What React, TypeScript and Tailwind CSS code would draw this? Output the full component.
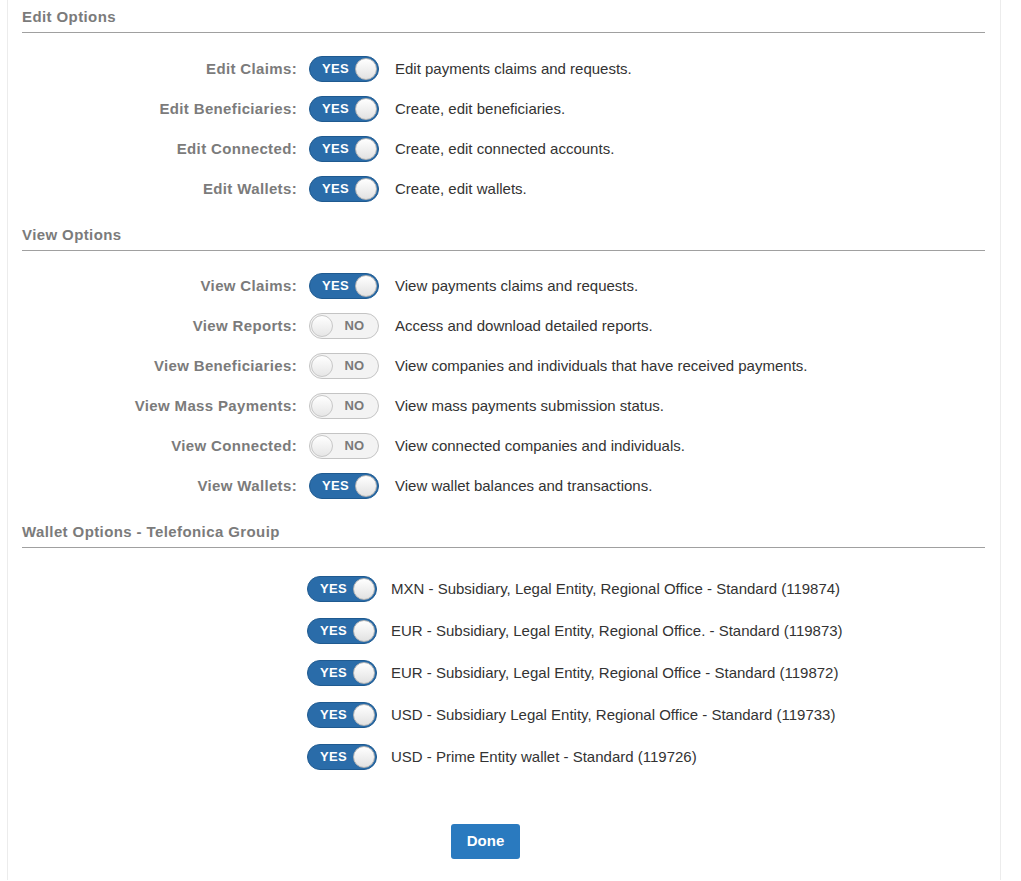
import React from "react";

const editRows = [
  { label: "Edit Claims:", on: true, desc: "Edit payments claims and requests." },
  { label: "Edit Beneficiaries:", on: true, desc: "Create, edit beneficiaries." },
  { label: "Edit Connected:", on: true, desc: "Create, edit connected accounts." },
  { label: "Edit Wallets:", on: true, desc: "Create, edit wallets." },
];

const viewRows = [
  { label: "View Claims:", on: true, desc: "View payments claims and requests." },
  { label: "View Reports:", on: false, desc: "Access and download detailed reports." },
  { label: "View Beneficiaries:", on: false, desc: "View companies and individuals that have received payments." },
  { label: "View Mass Payments:", on: false, desc: "View mass payments submission status." },
  { label: "View Connected:", on: false, desc: "View connected companies and individuals." },
  { label: "View Wallets:", on: true, desc: "View wallet balances and transactions." },
];

const wallets = [
  "MXN - Subsidiary, Legal Entity, Regional Office - Standard (119874)",
  "EUR - Subsidiary, Legal Entity, Regional Office. - Standard (119873)",
  "EUR - Subsidiary, Legal Entity, Regional Office - Standard (119872)",
  "USD - Subsidiary Legal Entity, Regional Office - Standard (119733)",
  "USD - Prime Entity wallet - Standard (119726)",
];

function Toggle({ on }: { on: boolean }) {
  if (on) {
    return (
      <div className="flex items-center justify-between w-[70px] h-[26px] rounded-full bg-[#2a6ca9] border border-[#1f5a90] pl-[12px] pr-[1px] flex-shrink-0">
        <span className="text-white text-[13px] font-bold tracking-[0.3px]">YES</span>
        <span className="w-[22px] h-[22px] rounded-full bg-gradient-to-b from-white to-[#e2e2e2] border border-[#b5b5b5]" />
      </div>
    );
  }
  return (
    <div className="flex items-center justify-between w-[70px] h-[26px] rounded-full bg-[#f3f3f3] border border-[#c4c4c4] pl-[1px] pr-[14px] flex-shrink-0">
      <span className="w-[22px] h-[22px] rounded-full bg-gradient-to-b from-white to-[#e6e6e6] border border-[#c8c8c8]" />
      <span className="text-[#7a7a7a] text-[13px] font-bold">NO</span>
    </div>
  );
}

function SectionTitle({ children }: { children: React.ReactNode }) {
  return (
    <div className="border-b border-[#a0a0a0] pb-[5px] mr-[15px]">
      <h2 className="text-[15px] font-bold text-[#7b7b7b] leading-[20px] tracking-[0.4px]">{children}</h2>
    </div>
  );
}

function OptionRow({ label, on, desc }: { label: string; on: boolean; desc: string }) {
  return (
    <div className="flex items-center h-[40px]">
      <div className="w-[275px] text-right text-[15px] font-bold text-[#7b7b7b] tracking-[0.35px]">{label}</div>
      <div className="ml-[12px]">
        <Toggle on={on} />
      </div>
      <div className="ml-[16px] text-[15px] text-[#333]">{desc}</div>
    </div>
  );
}

export default function App() {
  return (
    <div className="bg-white min-h-screen" style={{ fontFamily: '"Liberation Sans", Arial, sans-serif' }}>
      <div className="mx-[7px] w-[994px] border-x border-[#ececec] pl-[14px] pt-[7px] pb-[21px]">
        <SectionTitle>Edit Options</SectionTitle>
        <div className="pt-[16px] pb-[16px]">
          {editRows.map((r) => (
            <OptionRow key={r.label} {...r} />
          ))}
        </div>

        <SectionTitle>View Options</SectionTitle>
        <div className="pt-[15px] pb-[16px]">
          {viewRows.map((r) => (
            <OptionRow key={r.label} {...r} />
          ))}
        </div>

        <SectionTitle>Wallet Options - Telefonica Grouip</SectionTitle>
        <div className="pt-[20px] pl-[285px]">
          {wallets.map((w) => (
            <div key={w} className="flex items-center h-[42px]">
              <Toggle on />
              <div className="ml-[14px] text-[15px] text-[#333]">{w}</div>
            </div>
          ))}
        </div>

        <div className="flex pl-[429px] pt-[46px]">
          <button className="w-[69px] h-[35px] bg-[#2a7abf] text-white text-[15px] font-bold rounded-[3px]">Done</button>
        </div>
      </div>
    </div>
  );
}
